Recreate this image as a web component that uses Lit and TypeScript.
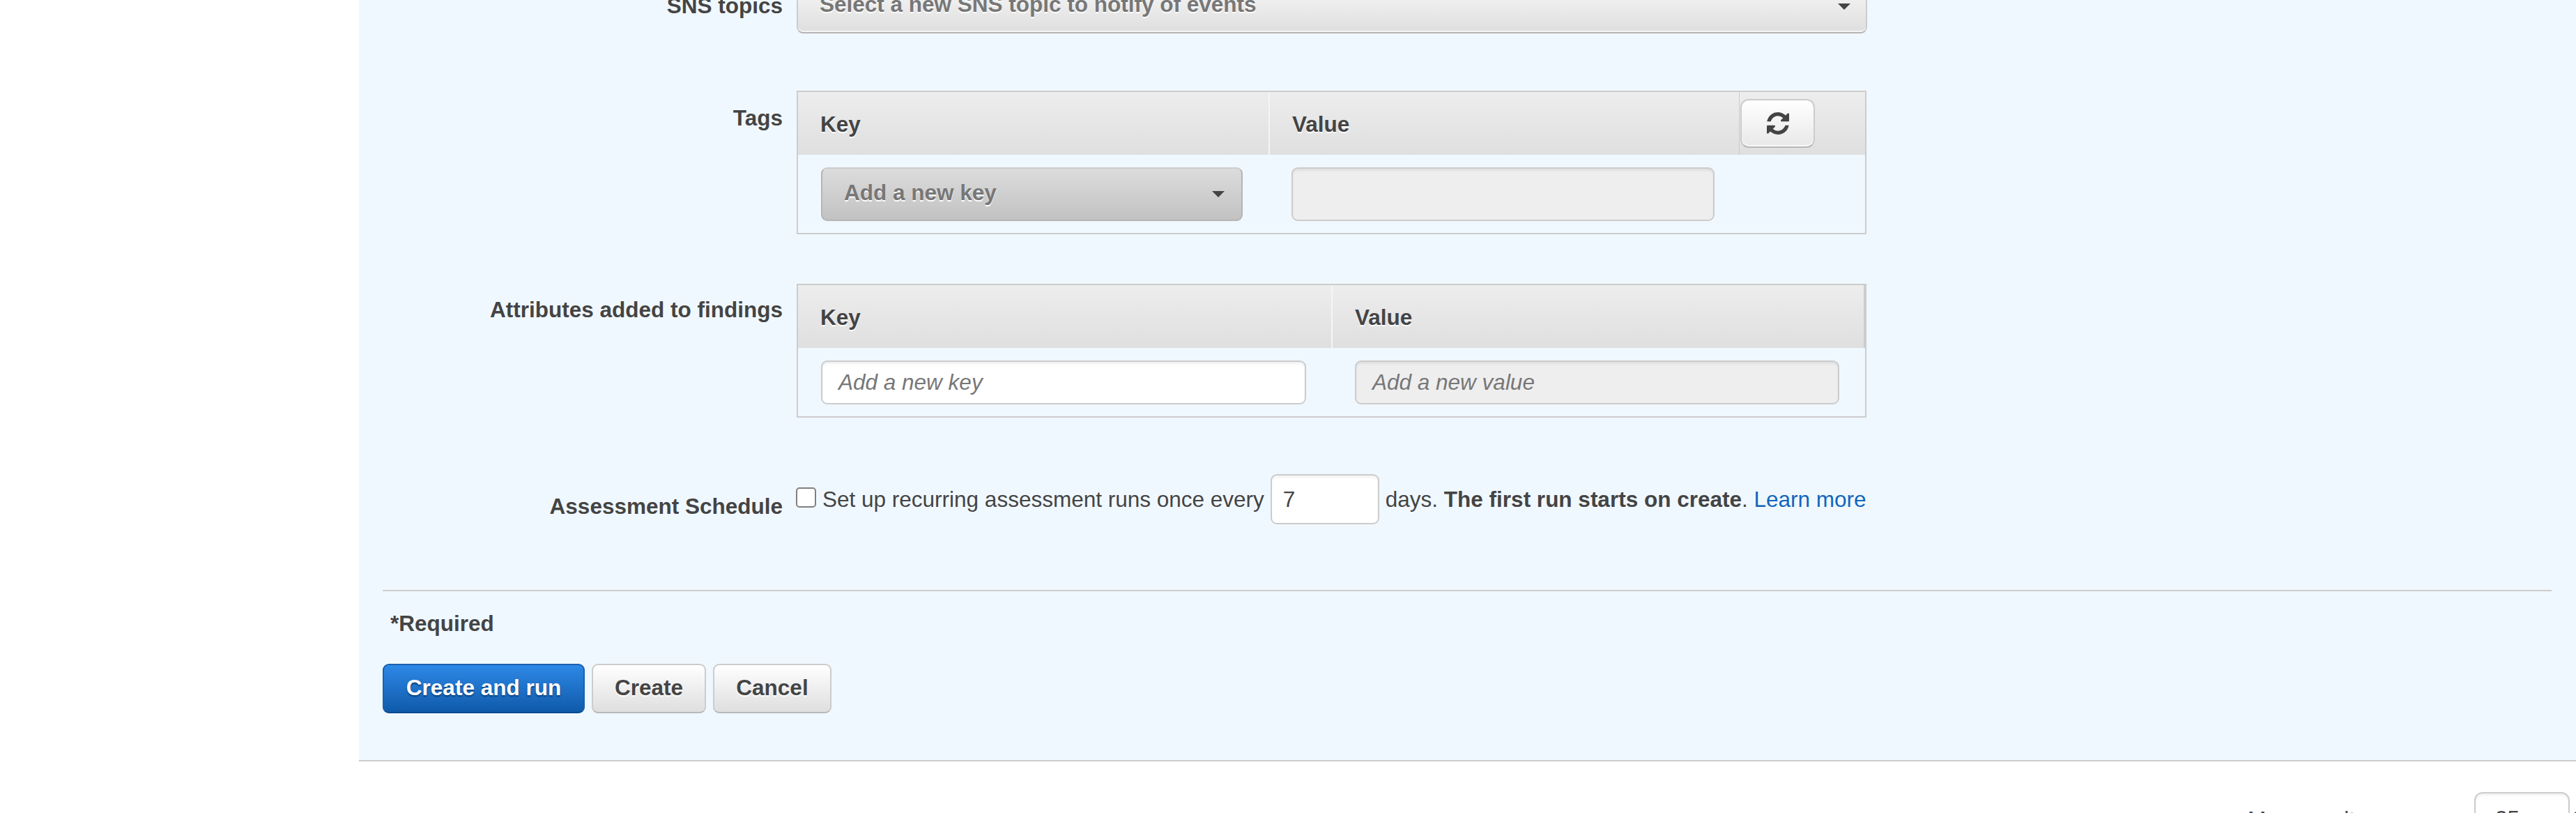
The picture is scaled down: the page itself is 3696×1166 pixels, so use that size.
import { LitElement, html, css } from "lit";
import { customElement } from "lit/decorators.js";

const refreshIcon = html`<svg class="refresh-icon" viewBox="128 128 1536 1536" width="32" height="32" aria-hidden="true">
  <path fill="#444" d="M1639 1056q0 5-1 7-64 268-268 434.500t-478 166.500q-146 0-282.500-55t-243.500-157l-129 129q-19 19-45 19t-45-19-19-45v-448q0-26 19-45t45-19h448q26 0 45 19t19 45-19 45l-137 137q71 66 161 102t187 36q134 0 250-65t186-179q11-17 53-117 8-23 30-23h192q13 0 22.500 9.500t9.500 22.500zm25-800v448q0 26-19 45t-45 19h-448q-26 0-45-19t-19-45 19-45l138-138q-148-137-349-137-134 0-250 65t-186 179q-11 17-53 117-8 23-30 23h-199q-13 0-22.500-9.500t-9.500-22.500v-7q65-268 270-434.500t480-166.500q146 0 284 55.500t245 156.500l130-129q19-19 45-19t45 19 19 45z"/>
</svg>`;

const gearIcon = html`<svg class="gear-icon" viewBox="0 0 32 32" width="32" height="32" aria-hidden="true">
  <circle cx="16" cy="16" r="10" fill="none" stroke="#444" stroke-width="6"/>
  <circle cx="16" cy="16" r="14" fill="none" stroke="#444" stroke-width="4" stroke-dasharray="5 6"/>
</svg>`;

@customElement("app-root")
export class AppRoot extends LitElement {
  static styles = css`
    :host {
      display: block;
      height: 1166px;
      overflow: hidden;
      background: #fff;
      font-family: "Liberation Sans", Arial, sans-serif;
      font-size: 31.5px;
      color: #444;
    }
    .page {
      display: flex;
      flex-direction: column;
      margin-top: -130px;
      padding-left: 515px;
    }
    .panel {
      background: #f0f8ff;
      border-bottom: 2px solid #ccc;
      padding: 0 35px 67px 34px;
    }
    .row {
      display: grid;
      grid-template-columns: 574px 1535px;
      column-gap: 20px;
      align-items: start;
    }
    .label {
      font-weight: 700;
      text-align: right;
      line-height: 38px;
    }
    .row-sns {
      height: 260px;
      padding-top: 100px;
      box-sizing: border-box;
    }
    .row-sns .label {
      padding-top: 19px;
    }
    .row-tags {
      height: 277px;
    }
    .row-tags .label {
      padding-top: 20px;
    }
    .row-attrs {
      height: 273px;
    }
    .row-attrs .label {
      padding-top: 18px;
    }
    .row-schedule {
      height: 166px;
    }
    .row-schedule .label {
      padding-top: 27px;
    }
    .select {
      box-sizing: border-box;
      display: flex;
      align-items: center;
      justify-content: space-between;
      font-weight: 700;
      color: #777;
      text-shadow: 0 2px 0 #fff;
      border: 2px solid #ccc;
      border-bottom-color: #b5b5b5;
      border-radius: 9px;
    }
    .sns-select {
      height: 78px;
      width: 1536px;
      padding: 0 22px 0 31px;
      background: linear-gradient(#f9f9f9, #dedede);
      box-shadow: inset 0 -2px 0 #f4f4f4;
    }
    .sns-select .select-text {
      padding-bottom: 6px;
    }
    .caret {
      width: 0;
      height: 0;
      border-left: 9px solid transparent;
      border-right: 9px solid transparent;
      border-top: 9px solid #444;
    }
    .table {
      box-sizing: border-box;
      width: 1535px;
      border: 2px solid #ccc;
    }
    .thead {
      display: grid;
      height: 90px;
      background: linear-gradient(#ededed, #dfdfdf);
      font-weight: 700;
      text-shadow: 0 2px 0 #fff;
    }
    .thead > div {
      box-sizing: border-box;
      display: flex;
      align-items: center;
      padding-left: 32px;
      padding-top: 2px;
    }
    .tags-head {
      grid-template-columns: 675px 675px 1fr;
    }
    .attrs-head {
      grid-template-columns: 765px 1fr;
      border-right: 2px solid #ccc;
    }
    .thead > div + div {
      border-left: 2px solid #f5f5f5;
    }
    .thead > .action {
      padding: 0;
      border-left: 1px solid #ccc;
    }
    .refresh {
      box-sizing: border-box;
      width: 107px;
      height: 70px;
      margin-left: 1px;
      display: flex;
      align-items: center;
      justify-content: center;
      background: linear-gradient(#fff, #e8e8e8);
      border: 2px solid #ccc;
      border-bottom-color: #b8b8b8;
      border-radius: 12px;
      box-shadow: inset 0 -2px 0 #fafafa;
    }
    .tbody {
      display: flex;
      gap: 70px;
      padding: 18px 0 0 33px;
    }
    .tags-body {
      height: 94px;
    }
    .attrs-body {
      height: 80px;
    }
    .key-select {
      height: 77px;
      width: 605px;
      padding: 0 24px 0 31px;
      background: linear-gradient(#dcdcdc, #c2c2c2);
      border-color: #ccc #b5b5b5 #b5b5b5;
    }
    .key-select .select-text {
      padding-bottom: 4px;
    }
    .field {
      box-sizing: border-box;
      display: flex;
      align-items: center;
      border: 2px solid #ccc;
      border-radius: 9px;
      color: #777;
      font-style: italic;
      padding-left: 23px;
      box-shadow: inset 0 3px 3px rgba(0, 0, 0, 0.06);
    }
    .field-disabled {
      background: #eee;
    }
    .field-white {
      background: #fff;
    }
    .tags-body .field {
      width: 607px;
      height: 77px;
    }
    .attrs-body .field {
      height: 63px;
    }
    .attrs-body .field-white {
      width: 696px;
    }
    .attrs-body .field-disabled {
      width: 695px;
    }
    .schedule {
      display: flex;
      align-items: center;
      height: 72px;
      white-space: nowrap;
    }
    .checkbox {
      box-sizing: border-box;
      flex: none;
      width: 29px;
      height: 29px;
      margin: -6px 9px 0 -1px;
      background: #fff;
      border: 2px solid #808080;
      border-radius: 5px;
    }
    .sentence {
      flex: none;
    }
    .days {
      box-sizing: border-box;
      flex: none;
      display: flex;
      align-items: center;
      width: 156px;
      height: 72px;
      margin: 0 9px 0 9px;
      padding: 0 0 0 16px;
      background: #fff;
      border: 2px solid #ccc;
      border-radius: 9px;
      box-shadow: inset 0 3px 3px rgba(0, 0, 0, 0.05);
    }
    b {
      font-weight: 700;
    }
    .link {
      color: #16b;
    }
    .rule {
      height: 2px;
      background: #ccc;
    }
    .required {
      font-weight: 700;
      margin: 27px 0 0 11px;
      line-height: 38px;
    }
    .buttons {
      display: flex;
      gap: 10px;
      margin-top: 39px;
    }
    .btn {
      box-sizing: border-box;
      display: flex;
      align-items: center;
      justify-content: center;
      height: 71px;
      padding-bottom: 2px;
      font-weight: 700;
      border: 2px solid #ccc;
      border-bottom-color: #b8b8b8;
      border-radius: 9px;
      background: linear-gradient(#fff, #dedede);
      text-shadow: 0 2px 2px #fff;
    }
    .btn-primary {
      color: #fff;
      width: 290px;
      background: linear-gradient(#2e88e6, #0f5aaa);
      border-color: #1a5fae #1a5fae #0b4a8f;
      text-shadow: 0 2px 2px #0b3f7a;
    }
    .btn-create {
      width: 164px;
    }
    .btn-cancel {
      width: 170px;
    }
    .pager {
      display: flex;
      align-items: flex-start;
      height: 60px;
      padding: 44px 0 0 2710px;
      white-space: nowrap;
    }
    .pager-label {
      flex: none;
      width: 325px;
      margin-top: 20px;
      line-height: 38px;
    }
    .pager-select {
      box-sizing: border-box;
      flex: none;
      width: 137px;
      height: 90px;
      padding: 17px 0 0 28px;
      border: 2px solid #ccc;
      border-radius: 12px;
      box-shadow: inset 0 3px 3px rgba(0, 0, 0, 0.05);
      line-height: 38px;
    }
    .gear-icon {
      flex: none;
      margin: 26px 0 0 1px;
    }
  `;

  render() {
    return html`
      <div class="page">
        <section class="panel">
          <div class="row row-sns">
            <div class="label">SNS topics</div>
            <div class="select sns-select">
              <span class="select-text">Select a new SNS topic to notify of events</span>
              <span class="caret"></span>
            </div>
          </div>

          <div class="row row-tags">
            <div class="label">Tags</div>
            <div class="table">
              <div class="thead tags-head">
                <div>Key</div>
                <div>Value</div>
                <div class="action">
                  <div class="refresh">${refreshIcon}</div>
                </div>
              </div>
              <div class="tbody tags-body">
                <div class="select key-select">
                  <span class="select-text">Add a new key</span>
                  <span class="caret"></span>
                </div>
                <div class="field field-disabled"></div>
              </div>
            </div>
          </div>

          <div class="row row-attrs">
            <div class="label">Attributes added to findings</div>
            <div class="table">
              <div class="thead attrs-head">
                <div>Key</div>
                <div>Value</div>
              </div>
              <div class="tbody attrs-body">
                <div class="field field-white">Add a new key</div>
                <div class="field field-disabled">Add a new value</div>
              </div>
            </div>
          </div>

          <div class="row row-schedule">
            <div class="label">Assessment Schedule</div>
            <div class="schedule">
              <span class="checkbox"></span>
              <span class="sentence">Set up recurring assessment runs once every</span>
              <span class="days">7</span>
              <span class="sentence">days. <b>The first run starts on create</b>. <span class="link">Learn more</span></span>
            </div>
          </div>

          <div class="rule"></div>
          <div class="required">*Required</div>
          <div class="buttons">
            <div class="btn btn-primary">Create and run</div>
            <div class="btn btn-create">Create</div>
            <div class="btn btn-cancel">Cancel</div>
          </div>
        </section>
        <div class="pager">
          <span class="pager-label">Max. results per page</span>
          <span class="pager-select">25</span>
          ${gearIcon}
        </div>
      </div>
    `;
  }
}
